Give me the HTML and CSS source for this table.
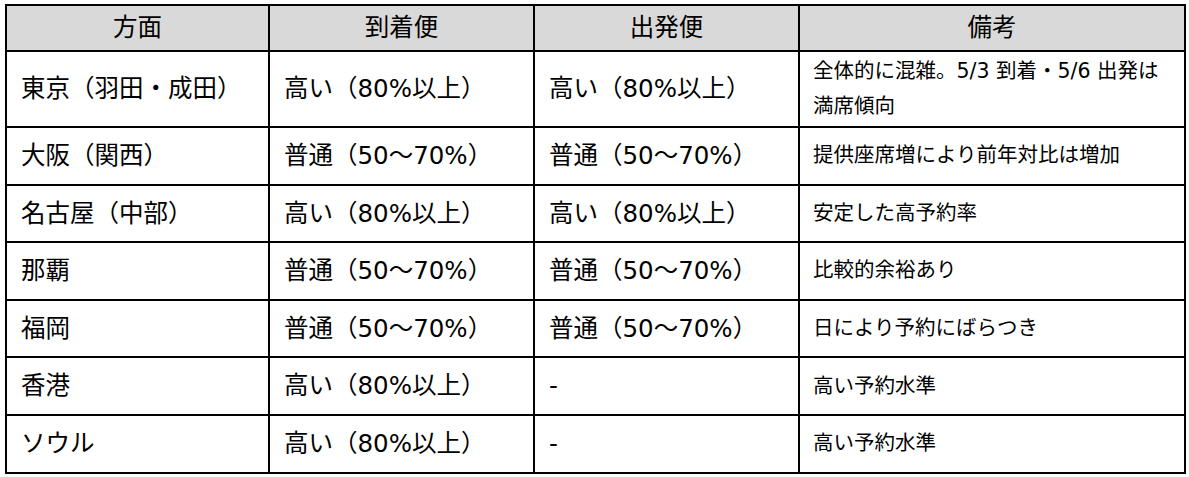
FILE: index.html
```html
<!DOCTYPE html>
<html lang="ja">
<head>
<meta charset="utf-8">
<link rel="stylesheet" href="styles.css">
</head>
<body>
<div class="wrap">
<table class="grid">
  <colgroup>
    <col class="c1"><col class="c2"><col class="c3"><col class="c4">
  </colgroup>
  <thead>
    <tr class="head"><th>方面</th><th>到着便</th><th>出発便</th><th>備考</th></tr>
  </thead>
  <tbody>
    <tr class="tall"><td>東京（羽田・成田）</td><td>高い（80%以上）</td><td>高い（80%以上）</td><td class="note">全体的に混雑。5/3 到着・5/6 出発は<br>満席傾向</td></tr>
    <tr><td>大阪（関西）</td><td>普通（50～70%）</td><td>普通（50～70%）</td><td class="note">提供座席増により前年対比は増加</td></tr>
    <tr><td>名古屋（中部）</td><td>高い（80%以上）</td><td>高い（80%以上）</td><td class="note">安定した高予約率</td></tr>
    <tr><td>那覇</td><td>普通（50～70%）</td><td>普通（50～70%）</td><td class="note">比較的余裕あり</td></tr>
    <tr><td>福岡</td><td>普通（50～70%）</td><td>普通（50～70%）</td><td class="note">日により予約にばらつき</td></tr>
    <tr><td>香港</td><td>高い（80%以上）</td><td>-</td><td class="note">高い予約水準</td></tr>
    <tr><td>ソウル</td><td>高い（80%以上）</td><td>-</td><td class="note">高い予約水準</td></tr>
  </tbody>
</table>
</div>
</body>
</html>
```

FILE: styles.css
```css
html, body {
  margin: 0;
  padding: 0;
  background: #fff;
}
.wrap {
  padding: 4px 0 0 5px;
}
.grid {
  border-collapse: collapse;
  width: 1179px;
  table-layout: fixed;
  font-family: "DejaVu Sans", "Noto Sans CJK JP", sans-serif;
  color: #000;
}
.c1 { width: 263px; }
.c2 { width: 265px; }
.c3 { width: 265px; }
.c4 { width: 386px; }
.grid th, .grid td {
  border: 2px solid #000;
  padding: 0 0 0 14px;
  text-align: left;
  vertical-align: middle;
  font-size: 24.5px;
  font-weight: normal;
  line-height: 1.2;
  white-space: nowrap;
}
.grid th {
  background: #d9d9d9;
  text-align: center;
  padding: 0;
  height: 44px;
}
.grid tbody tr td {
  height: 55.6px;
}
.grid tbody tr.tall td {
  height: 74px;
}
.grid td.note {
  font-size: 20.5px;
  line-height: 35px;
  padding-left: 13px;
}
```
